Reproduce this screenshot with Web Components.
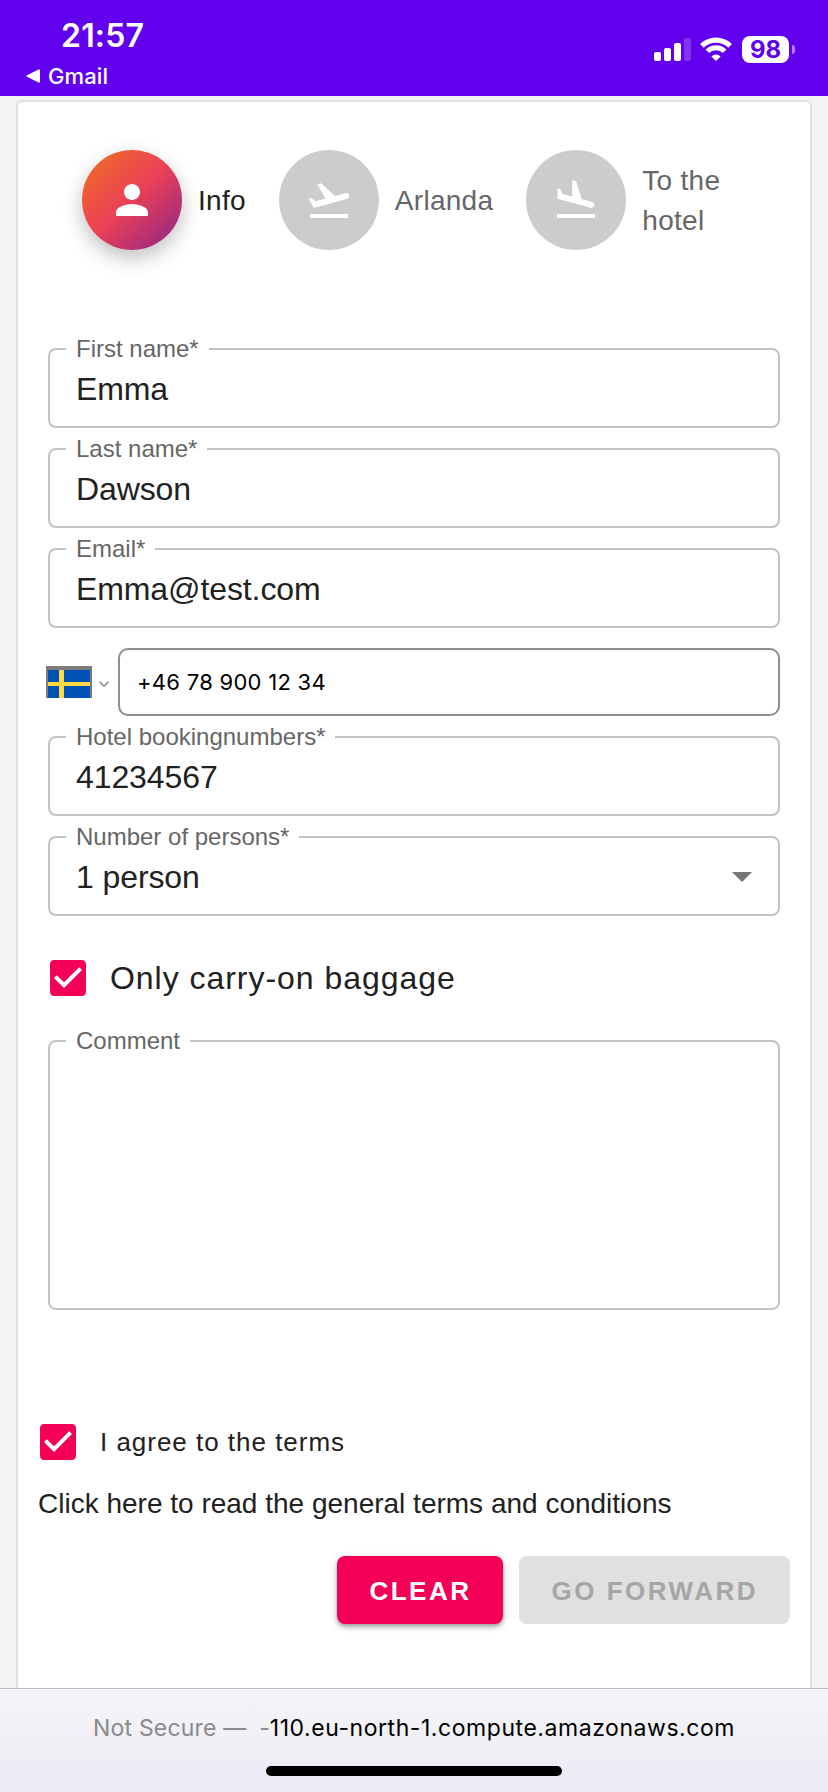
<!DOCTYPE html>
<html lang="en">
<head>
<meta charset="utf-8">
<title>Transfer booking</title>
<style>
  html, body { margin: 0; height: 100%; }
  body { background: #f3f3f5; font-family: "Liberation Sans", Arial, sans-serif; color: #212121; overflow: hidden; }
</style>
</head>
<body>
<booking-app></booking-app>

<script>
class StatusBar extends HTMLElement {
  constructor() {
    super();
    this.attachShadow({mode: 'open'}).innerHTML = `
      <style>
        :host { display: flex; justify-content: space-between; height: 96px; flex: none; background: #6200ee; color: #fff; font-family: Inter, sans-serif; }
        .left { padding: 17px 0 0 26px; }
        .time { padding-left: 35px; font-size: 32px; line-height: 38px; font-weight: 600; letter-spacing: 0.2px; }
        .back { display: flex; align-items: center; gap: 8px; font-size: 22px; line-height: 28px; font-weight: 500; letter-spacing: 0.1px; padding-top: 7px; }
        .right { display: flex; align-items: flex-start; padding: 36px 33px 0 0; }
        .signal { margin: 2px 9px 0 0; }
        .wifi { margin: 1px 10px 0 0; }
        .battery { width: 47px; height: 27px; line-height: 27px; border-radius: 8px; background: #fff; color: #6200ee; text-align: center; font-size: 24px; font-weight: 700; }
        .tip { width: 3px; height: 9px; margin: 9px 0 0 3px; border-radius: 0 4px 4px 0; background: rgba(255,255,255,0.5); }
      </style>
      <div class="left">
        <div class="time">21:57</div>
        <div class="back">
          <svg width="14" height="14" viewBox="0 0 14 14"><path d="M1 6.2 12.5.6Q14 0 14 1.5v11q0 1.5-1.5.9L1 7.8Q-.6 7 1 6.2z" fill="#fff"/></svg>
          <span>Gmail</span>
        </div>
      </div>
      <div class="right">
        <svg class="signal" width="37" height="23" viewBox="0 0 37 23" fill="#fff">
          <rect x="0" y="14" width="7" height="9" rx="2"/><rect x="10" y="10" width="7" height="13" rx="2"/>
          <rect x="20" y="5" width="7" height="18" rx="2"/><rect x="30" y="0" width="7" height="23" rx="2" opacity="0.2"/>
        </svg>
        <svg class="wifi" width="32" height="24" viewBox="0 0 32 24" fill="none" stroke="#fff">
          <path d="M1.9 8.9a20 20 0 0 1 28.2 0" stroke-width="5.2"/>
          <path d="M7.3 14.3a12.4 12.4 0 0 1 17.4 0" stroke-width="5"/>
          <path d="M16 24l-4.6-4.6a6.5 6.5 0 0 1 9.2 0z" fill="#fff" stroke="none"/>
        </svg>
        <div class="battery">98</div>
        <div class="tip"></div>
      </div>
    `;
  }
}
customElements.define('status-bar', StatusBar);

const STEP_ICONS = {
  person: 'M12 12c2.21 0 4-1.79 4-4s-1.79-4-4-4-4 1.79-4 4 1.79 4 4 4zm0 2c-2.67 0-8 1.34-8 4v2h16v-2c0-2.66-5.33-4-8-4z',
  takeoff: 'M2.5 19h19v2h-19zm19.57-9.36c-.21-.8-1.04-1.28-1.84-1.06L14.92 10l-6.9-6.43-1.93.51 4.14 7.17-4.97 1.33-1.97-1.54-1.45.39 1.82 3.16.77 1.33 1.6-.43 5.31-1.42 4.35-1.16L21 11.49c.81-.23 1.28-1.05 1.07-1.85z',
  landing: 'M2.5 19h19v2h-19zm7.18-5.73l4.35 1.16 5.31 1.42c.8.21 1.62-.26 1.84-1.06.21-.8-.26-1.62-1.06-1.84l-5.31-1.42-2.76-9.02L10.12 2v8.28L5.15 8.95l-.93-2.32-1.45-.39v5.17l1.6.43 5.31 1.43z'
};

class BookingStep extends HTMLElement {
  constructor() {
    super();
    this.attachShadow({mode: 'open'}).innerHTML = `
      <style>
        :host { display: flex; align-items: center; gap: 16px; color: #666; font-size: 28px; line-height: 40px; letter-spacing: 0.28px; }
        :host([active]) { color: #212121; }
        .circle { display: flex; align-items: center; justify-content: center; flex: none; width: 100px; height: 100px; border-radius: 50%; background: #ccc; }
        :host([active]) .circle { background: linear-gradient(136deg, rgb(242,113,33) 0%, rgb(233,64,87) 50%, rgb(138,35,135) 100%); box-shadow: 0 8px 20px rgba(0,0,0,0.25); }
        span { padding-top: 2px; }
      </style>
      <div class="circle">
        <svg width="48" height="48" viewBox="0 0 24 24" fill="#fff"><path d="${STEP_ICONS[this.getAttribute('icon')]}"/></svg>
      </div>
      <span><slot></slot></span>
    `;
  }
}
customElements.define('booking-step', BookingStep);

// Outlined field, the legend cuts the border open
class OutlinedField extends HTMLElement {
  constructor() {
    super();
    this.attachShadow({mode: 'open'}).innerHTML = `
      <style>
        :host { display: block; height: 80px; }
        fieldset { box-sizing: border-box; height: 100%; min-width: 0; margin: 0; padding: 0 28px 0 16px; border: 2px solid #c4c4c4; border-radius: 8px; }
        legend { height: 2px; line-height: 2px; padding: 0 10px; font-size: 24px; color: #666; white-space: nowrap; }
        .value { display: flex; align-items: center; justify-content: space-between; height: 78px; padding-left: 10px; font-size: 32px; line-height: 38px; letter-spacing: -0.1px; }
        svg { display: none; margin-right: -2px; }
        :host([select]) svg { display: block; }
      </style>
      <fieldset>
        <legend>${this.getAttribute('label')}</legend>
        <div class="value"><span><slot></slot></span><svg width="20" height="10" viewBox="0 0 20 10"><path d="M0 0h20L10 10z" fill="#757575"/></svg></div>
      </fieldset>
    `;
  }
}
customElements.define('outlined-field', OutlinedField);

class PhoneField extends HTMLElement {
  constructor() {
    super();
    this.attachShadow({mode: 'open'}).innerHTML = `
      <style>
        :host { display: flex; align-items: center; height: 68px; margin-left: -2px; }
        .flag { margin: 0 7px 0 0; }
        .chevron { margin: 4px 9px 0 0; }
        .input { flex: 1; box-sizing: border-box; height: 68px; border: 2px solid #8e8d92; border-radius: 10px; padding-left: 17px; font: 22px/64px Inter, sans-serif; letter-spacing: 0.28px; color: #000; }
      </style>
      <svg class="flag" width="46" height="32" viewBox="0 0 46 32" shape-rendering="crispEdges">
        <path d="M0 0h46v32H0z" fill="#7b7b7b"/><path d="M2 4h42v28H2z" fill="#0052b4"/><path d="M13 4h5v28h-5zM2 16h42v4H2z" fill="#ffda44"/>
      </svg>
      <svg class="chevron" width="10" height="6" viewBox="0 0 10 6"><path d="M.5.7 5 5.2 9.5.7" fill="none" stroke="#a0a0a0" stroke-width="1.8"/></svg>
      <div class="input"><slot></slot></div>
    `;
  }
}
customElements.define('phone-field', PhoneField);

class CheckRow extends HTMLElement {
  constructor() {
    super();
    this.attachShadow({mode: 'open'}).innerHTML = `
      <style>
        :host { display: flex; align-items: center; gap: 18px; height: 48px; }
        svg { flex: none; }
        span { padding-top: 1px; }
      </style>
      <svg width="48" height="48" viewBox="0 0 24 24" fill="#f50057"><path d="M19 3H5c-1.11 0-2 .9-2 2v14c0 1.1.89 2 2 2h14c1.11 0 2-.9 2-2V5c0-1.1-.89-2-2-2zm-9 14l-5-5 1.41-1.41L10 14.17l7.59-7.59L19 8l-9 9z"/></svg>
      <span><slot></slot></span>
    `;
  }
}
customElements.define('check-row', CheckRow);

class FormButton extends HTMLElement {
  constructor() {
    super();
    this.attachShadow({mode: 'open'}).innerHTML = `
      <style>
        :host { display: block; }
        button { display: block; height: 68px; padding: 2px 32px 0; border: 0; border-radius: 8px; background: #f50057; color: #fff; font: bold 26px/66px "Liberation Sans", Arial, sans-serif; letter-spacing: 2.5px; white-space: nowrap; box-shadow: 0 3px 5px -1px rgba(0,0,0,0.35), 0 2px 8px rgba(0,0,0,0.16); }
        button:disabled { background: #e0e0e0; color: #a6a6a6; box-shadow: none; }
      </style>
      <button ${this.hasAttribute('disabled') ? 'disabled' : ''}><slot></slot></button>
    `;
  }
}
customElements.define('form-button', FormButton);

class BrowserBar extends HTMLElement {
  constructor() {
    super();
    this.attachShadow({mode: 'open'}).innerHTML = `
      <style>
        :host { display: flex; flex-direction: column; align-items: center; box-sizing: border-box; height: 104px; flex: none; border-top: 1px solid #bcbcc0; background: linear-gradient(#f4f4f8, #efeff5 55%, #edeaf6); }
        .url { display: flex; width: 642px; margin-top: 23px; font: 23px/32px Inter, sans-serif; color: #000; white-space: pre; }
        .note { color: #8a8a8f; width: 167px; letter-spacing: 0.2px; }
        .fade { color: #8a8a8f; }
        .host { letter-spacing: 0.55px; }
        .home { width: 296px; height: 10px; margin-top: 22px; border-radius: 5px; background: #000; }
      </style>
      <div class="url"><span class="note">Not Secure —</span><span class="fade">-</span><span class="host">110.eu-north-1.compute.amazonaws.com</span></div>
      <div class="home"></div>
    `;
  }
}
customElements.define('browser-bar', BrowserBar);

class BookingApp extends HTMLElement {
  constructor() {
    super();
    this.attachShadow({mode: 'open'}).innerHTML = `
      <style>
        :host { display: flex; flex-direction: column; height: 1792px; width: 828px; }
        .card { flex: 1; min-height: 0; margin: 4px 16px 0; border: 2px solid #e0e0e0; border-bottom: 0; border-radius: 6px 6px 0 0; background: #fff; }
        .steps { display: flex; gap: 33px; height: 100px; padding: 48px 60px 0 64px; }
        .steps booking-step:last-child { width: 210px; }
        .fields { display: flex; flex-direction: column; gap: 20px; margin: 98px 30px 0; }
        .baggage { margin: 18px 0 18px -4px; font-size: 32px; letter-spacing: 0.96px; }
        .comment { height: 270px; }
        .terms { margin: 108px 0 0 16px; font-size: 26px; letter-spacing: 0.98px; }
        p { margin: 18px 0 0 20px; font-size: 28px; line-height: 40px; }
        .actions { display: flex; justify-content: flex-end; gap: 16px; margin: 32px 20px 0; }
      </style>
      <status-bar></status-bar>
      <main class="card">
        <div class="steps">
          <booking-step icon="person" active>Info</booking-step>
          <booking-step icon="takeoff">Arlanda</booking-step>
          <booking-step icon="landing">To the hotel</booking-step>
        </div>
        <div class="fields">
          <outlined-field label="First name*">Emma</outlined-field>
          <outlined-field label="Last name*">Dawson</outlined-field>
          <outlined-field label="Email*">Emma@test.com</outlined-field>
          <phone-field>+46 78 900 12 34</phone-field>
          <outlined-field label="Hotel bookingnumbers*">41234567</outlined-field>
          <outlined-field label="Number of persons*" select>1 person</outlined-field>
          <check-row class="baggage">Only carry-on baggage</check-row>
          <outlined-field class="comment" label="Comment"></outlined-field>
        </div>
        <check-row class="terms">I agree to the terms</check-row>
        <p>Click here to read the general terms and conditions</p>
        <div class="actions">
          <form-button>CLEAR</form-button>
          <form-button disabled>GO FORWARD</form-button>
        </div>
      </main>
      <browser-bar></browser-bar>
    `;
  }
}
customElements.define('booking-app', BookingApp);
</script>
</body>
</html>
